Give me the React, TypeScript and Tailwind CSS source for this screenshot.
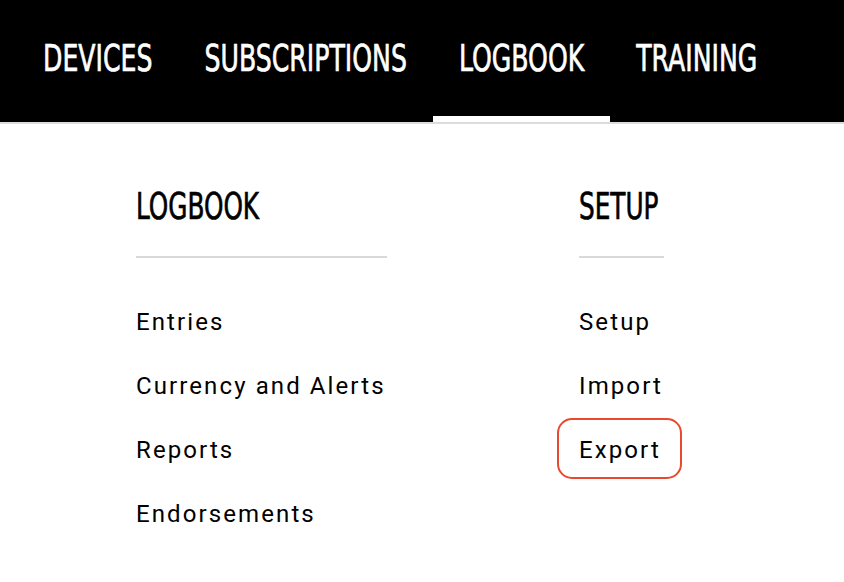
const navItems = [
  { label: "DEVICES", active: false },
  { label: "SUBSCRIPTIONS", active: false },
  { label: "LOGBOOK", active: true },
  { label: "TRAINING", active: false },
];

const logbookLinks = ["Entries", "Currency and Alerts", "Reports", "Endorsements"];
const setupLinks = ["Setup", "Import", "Export"];

// condensed display face, stretched upwards to get the tall caps
const headFont =
  "font-['DejaVu_Sans_Condensed','Liberation_Sans_Narrow',sans-serif] [-webkit-text-stroke:0.5px_currentColor]";

export default function App() {
  return (
    <div className="min-h-screen w-[844px] bg-white font-['Roboto',sans-serif] text-black">
      {/* top nav */}
      <nav className="flex h-[124px] items-stretch border-b-2 border-[#dcdcdc] bg-black pl-[17px]">
        {navItems.map((item) => (
          <a
            key={item.label}
            className={
              "flex items-center border-b-[6px] px-[26px] pt-[2px] text-[28px] text-white " +
              headFont +
              (item.active ? " border-white" : " border-transparent")
            }
          >
            <span className="inline-block scale-y-[1.35]">{item.label}</span>
          </a>
        ))}
      </nav>

      {/* mega menu */}
      <div className="flex pl-[136px] pt-[64px]">
        <div className="w-[443px]">
          <h2 className={"w-[251px] border-b-2 border-[#d9d9d9] pb-[32px] text-[27.5px] leading-[36px] " + headFont}>
            <span className="inline-block scale-y-[1.35]">LOGBOOK</span>
          </h2>
          <ul className="pt-[32px]">
            {logbookLinks.map((l) => (
              <li key={l} className="h-[64px] text-[24px] leading-[64px] tracking-[2.1px]">
                {l}
              </li>
            ))}
          </ul>
        </div>
        <div>
          <h2 className={"w-[85px] border-b-2 border-[#d9d9d9] pb-[32px] text-[27.5px] leading-[36px] " + headFont}>
            <span className="inline-block scale-y-[1.35]">SETUP</span>
          </h2>
          <ul className="pt-[32px]">
            {setupLinks.map((l) => (
              <li key={l} className="relative h-[64px] text-[24px] leading-[64px] tracking-[2.1px]">
                {l}
                {l === "Export" && (
                  <span className="absolute left-[-22px] top-0 h-[61px] w-[125px] rounded-[15px] border-2 border-[#e8492f]" />
                )}
              </li>
            ))}
          </ul>
        </div>
      </div>
    </div>
  );
}
